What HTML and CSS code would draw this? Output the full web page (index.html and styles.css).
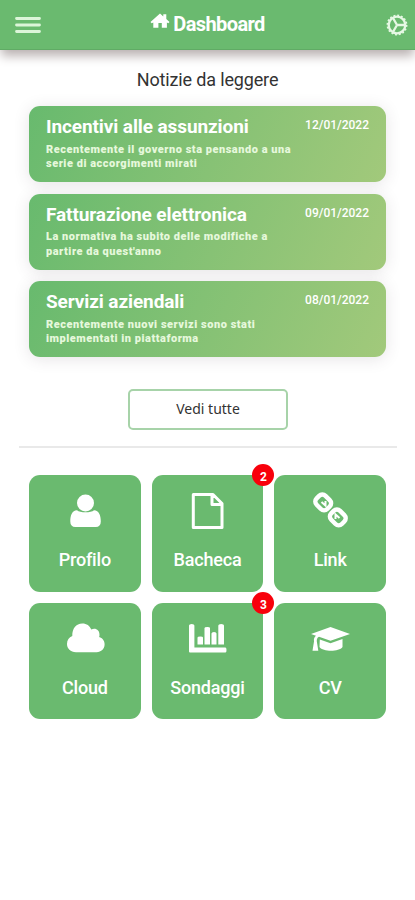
FILE: index.html
```html
<!DOCTYPE html>
<html lang="it">
<head>
<meta charset="utf-8">
<meta name="viewport" content="width=device-width, initial-scale=1">
<title>Dashboard</title>
<link rel="stylesheet" href="styles.css">
</head>
<body>
<header class="topbar">
  <svg class="menu" viewBox="0 0 26 18"><path d="M1.5 2.5h23M1.5 9h23M1.5 15.5h23"/></svg>
  <h1 class="brand">
    <svg class="home" viewBox="0 0 20 17"><path d="M10 .5 13.3 3.4V1.2h3v4.9L19.5 9l-1.2 1.2-1.4-.8v5.4H11.8V10H8.4v4.8H3.3V9.4l-1.6.8L.5 9z"/></svg>
    <span>Dashboard</span>
  </h1>
  <svg class="gear" viewBox="0 0 22 22"><circle cx="11" cy="11" r="8.3"/><circle class="teeth" cx="11" cy="11" r="9.7"/><path d="M11 11h8M11 11 7 4M11 11 7 18"/></svg>
</header>
<main>
  <h2 class="heading">Notizie da leggere</h2>
  <section class="news">
    <article class="card">
      <div class="copy"><h3>Incentivi alle assunzioni</h3><p>Recentemente il governo sta pensando a una<br>serie di accorgimenti mirati</p></div>
      <time>12/01/2022</time>
    </article>
    <article class="card">
      <div class="copy"><h3>Fatturazione elettronica</h3><p>La normativa ha subito delle modifiche a<br>partire da quest'anno</p></div>
      <time>09/01/2022</time>
    </article>
    <article class="card">
      <div class="copy"><h3>Servizi aziendali</h3><p>Recentemente nuovi servizi sono stati<br>implementati in piattaforma</p></div>
      <time>08/01/2022</time>
    </article>
  </section>
  <button class="all">Vedi tutte</button>
  <hr class="rule">
  <nav class="tiles">
    <a class="tile"><svg viewBox="0 0 48 40"><path d="M16 20.3C19 23 30 23 33 20.3c5 .3 6.8 5 6.8 11.2 0 3.600-1.800 5.500-5 5.500H14.300c-3.200 0-5-1.900-5-5.500C9.300 25.300 11 20.600 16 20.300z"/><circle cx="24.500" cy="13" r="8.500"/></svg><span>Profilo</span></a>
    <a class="tile"><svg viewBox="0 0 48 40"><path class="line" d="M10.300 4.500H30L39 13.500V37.500H10.300zM29 4.500V14.500H39"/></svg><span>Bacheca</span><b class="badge">2</b></a>
    <a class="tile"><svg viewBox="0 0 48 40"><g class="chain"><rect x="9.700" y="6.200" width="15" height="12.500" rx="4.500" transform="rotate(45 17.200 12.450)"/><rect x="24.300" y="21.200" width="15" height="12.500" rx="4.500" transform="rotate(45 31.800 27.450)"/><path class="hook" d="m15.500 12 4 3.500v-4.500M29.500 29v-4.500l4 3.500"/></g></svg><span>Link</span></a>
    <a class="tile"><svg viewBox="0 0 48 40"><path d="M15 34.200C9.500 34.200 6 30.500 6 26c0-4 2-6.500 5.300-8C11 10.500 15 5.500 21.300 5.500c4.500 0 7.400 2.300 9 6 4-2.200 8.500.5 8.200 5.500 0 .8-.1 1.300-.4 2 3.400 1 5.500 3.700 5.500 7.300 0 4.500-3.400 7.900-8 7.900z"/></svg><span>Cloud</span></a>
    <a class="tile"><svg viewBox="0 0 48 40"><path d="M6 7.500Q6 6 8.700 6T11.400 7.500V29.500H42.500Q43.500 29.500 43.500 32T42.500 34.500H7Q6 34.500 6 33.500zM14.500 19.500Q14.500 18.500 17.300 18.500T20 19.500V26.500H14.500zM21.500 10Q21.500 9 24.300 9T27 10V26.500H21.500zM28.500 15.500Q28.500 14 31 14T33.500 15.500V26.500H28.500zM35.300 7.500Q35.300 6 38.200 6T41 7.500V26.500H35.300z"/></svg><span>Sondaggi</span><b class="badge">3</b></a>
    <a class="tile"><svg viewBox="0 0 48 40"><path d="M24.500 9 44 16 24.500 22.800 13 18.800C11 19.700 10.800 21.500 10.800 23.200L12.300 32.800H6.500L8 23.500C7.500 20.800 8.500 18.800 10 17.800L5 16zM13.800 21.500 24.500 25.200 36.500 21V29C33 34 17 34 13.500 29z"/></svg><span>CV</span></a>
  </nav>
</main>
</body>
</html>
```
FILE: styles.css
```css
* { box-sizing: border-box; }
body { margin: 0; background: #fff; color: #333; font-family: Roboto, sans-serif; }
h1, h2, h3, p { margin: 0; }
svg { display: block; fill: #fff; }

.topbar {
  position: relative;
  display: grid;
  grid-template-columns: 26px 1fr 22px;
  align-items: center;
  height: 50px;
  padding: 0 7px 0 15px;
  background: #6aba6f;
  border-bottom: 1px solid #60ab65;
  box-shadow: 0 7px 10px -1px #bab2b2;
}
.menu { width: 26px; height: 18px; margin-top: 1px; fill: none; stroke: #dcf5d9; stroke-width: 2.800; stroke-linecap: round; }
.brand { display: flex; justify-content: center; gap: 3px; margin-left: -12px; color: #fff; font-size: 20px; line-height: 24px; letter-spacing: -0.600px; margin-top: -2px; }
.home { width: 20px; height: 17px; margin-top: 1px; }
.gear { width: 22px; height: 22px; fill: none; stroke: #e6f8e4; stroke-width: 2.300; }
.teeth { stroke-width: 1.500; stroke-dasharray: 1.900 1.910; }

.heading { padding-top: 19px; text-align: center; font-size: 18px; font-weight: 400; line-height: 22px; letter-spacing: -0.150px; }

.news { display: grid; gap: 11.500px; margin: 15px 29px 0; }
.card {
  display: flex;
  justify-content: space-between;
  height: 76px;
  padding: 10px 17px 0 17px;
  border-radius: 11px;
  color: #fff;
  background: linear-gradient(115deg, #68ba6e, #a2c97b);
  box-shadow: 0 2px 16px rgba(60, 50, 60, .13);
}
.copy { white-space: nowrap; }
.card h3 { font-size: 19px; line-height: 22px; font-weight: 700; letter-spacing: -0.100px; }
.card p { margin-top: 4.500px; color: #e6f8dc; font-size: 11px; line-height: 14.500px; font-weight: 900; letter-spacing: .520px; }
.card time { margin-top: 2px; font-size: 12px; line-height: 14px; font-weight: 500; }

.all {
  display: block;
  width: 160px;
  height: 41px;
  margin: 32px 0 0 128px;
  padding: 0 0 3px;
  border: 2px solid #a7d3a9;
  border-radius: 5px;
  background: #fff;
  color: #333;
  font: 14px "Noto Sans", sans-serif;
}
.rule { height: 2px; margin: 16px 18px 0 19px; border: 0; background: #e9e9e9; }

.tiles {
  display: grid;
  grid-template-columns: repeat(3, 1fr);
  grid-auto-rows: 116.500px;
  gap: 11px;
  margin: 27px 29px 0;
}
.tile {
  position: relative;
  display: flex;
  flex-direction: column;
  align-items: center;
  padding-top: 15px;
  border-radius: 11px;
  background: #6aba6f;
  color: #fff;
}
.tile svg { width: 48px; height: 40px; }
.tile span { margin-top: 19px; font-size: 18px; line-height: 22px; font-weight: 500; letter-spacing: -0.200px; }
.tile .line { fill: none; stroke: #fff; stroke-width: 3; stroke-linejoin: round; }
.chain { fill: none; stroke: #fff; stroke-width: 4.500; }
.hook { stroke-width: 2; }
.badge {
  position: absolute;
  z-index: 1;
  top: -11px;
  right: -11px;
  width: 22px;
  height: 22px;
  border-radius: 50%;
  background: #f8000b;
  font-size: 12px;
  line-height: 26px;
  text-align: center;
}
```
